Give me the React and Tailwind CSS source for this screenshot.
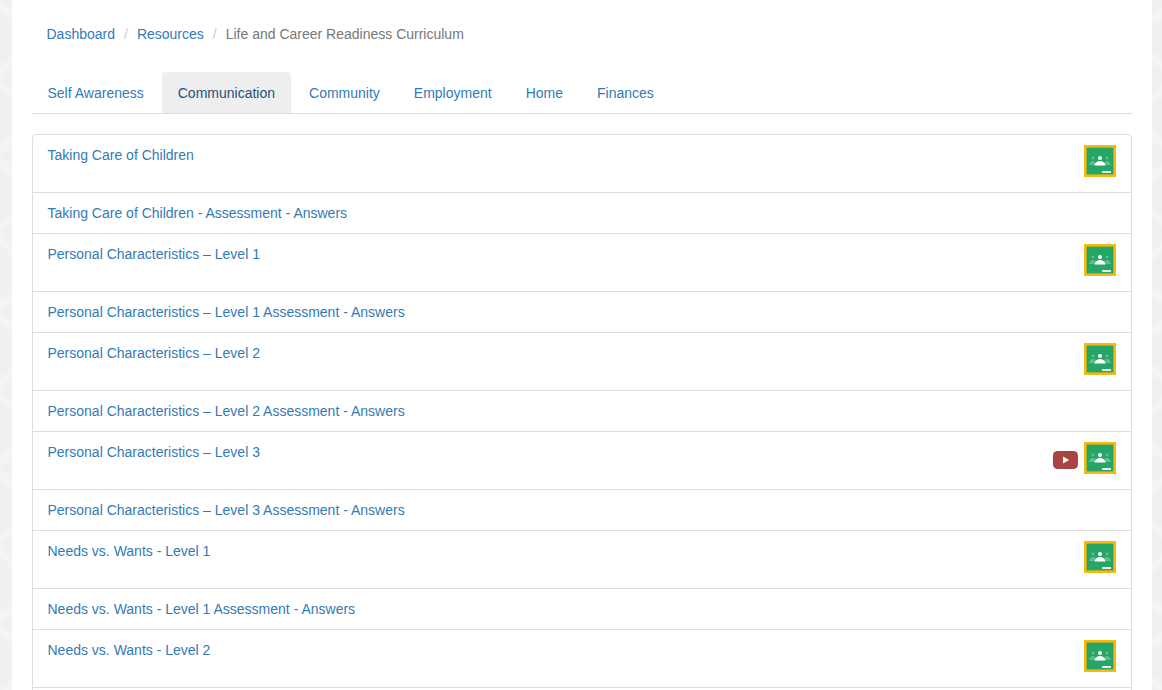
const tabs = ['Self Awareness', 'Communication', 'Community', 'Employment', 'Home', 'Finances'];

const rows = [
  { title: 'Taking Care of Children', classroom: true },
  { title: 'Taking Care of Children - Assessment - Answers' },
  { title: 'Personal Characteristics – Level 1', classroom: true },
  { title: 'Personal Characteristics – Level 1 Assessment - Answers' },
  { title: 'Personal Characteristics – Level 2', classroom: true },
  { title: 'Personal Characteristics – Level 2 Assessment - Answers' },
  { title: 'Personal Characteristics – Level 3', classroom: true, video: true },
  { title: 'Personal Characteristics – Level 3 Assessment - Answers' },
  { title: 'Needs vs. Wants - Level 1', classroom: true },
  { title: 'Needs vs. Wants - Level 1 Assessment - Answers' },
  { title: 'Needs vs. Wants - Level 2', classroom: true },
];

function ClassroomIcon() {
  return (
    <svg width="32" height="32" viewBox="0 0 32 32" className="block">
      <rect width="32" height="32" fill="#f9b90c" />
      <rect x="2.600" y="2.600" width="26.800" height="26.800" fill="#25a667" />
      <circle cx="9" cy="13" r="1.400" fill="#5fbd8f" />
      <circle cx="23" cy="13" r="1.400" fill="#5fbd8f" />
      <path d="M5 20c.5-2.500 2.200-4 4-4s3.500 1.500 4 4zM19 20c.5-2.500 2.200-4 4-4s3.500 1.500 4 4z" fill="#5fbd8f" />
      <circle cx="16" cy="13" r="2" fill="#fff" />
      <path d="M10.500 20.500c.6-3 2.800-4.500 5.500-4.500s4.900 1.500 5.500 4.500z" fill="#fff" />
      <rect x="18" y="26" width="9" height="2" fill="#e8efe9" />
    </svg>
  );
}

function VideoIcon() {
  return (
    <svg width="25" height="18" viewBox="0 0 25 18" className="block">
      <rect width="25" height="18" rx="4.500" fill="#a94442" />
      <path d="M10 5.500v7l6-3.500z" fill="#fff" />
    </svg>
  );
}

function ListRow({ row }) {
  return (
    <div className={`flex justify-between border-b border-[#dddddd] pl-[14.5px] pr-[15px] pt-[10px] ${row.classroom ? 'h-[58px]' : 'h-[41px]'}`}>
      <a href="#" className="leading-[20px] text-[#337ab7]">{row.title}</a>
      {row.classroom && (
        <div className="flex items-start gap-[6px]">
          {row.video && <div className="mt-[9px]"><VideoIcon /></div>}
          <ClassroomIcon />
        </div>
      )}
    </div>
  );
}

export default function App() {
  return (
    <div className="h-[690px] overflow-hidden bg-[#f0f0f0] bg-[linear-gradient(40deg,transparent_44%,#f5f5f5_50%,transparent_56%),linear-gradient(-40deg,transparent_44%,#f5f5f5_50%,transparent_56%)] bg-[size:78px_78px] font-['Liberation_Sans',Arial,sans-serif] text-[14px]">
      <div className="ml-[12px] h-full w-[1140px] overflow-hidden bg-white px-[20px]">
        {/* Breadcrumb */}
        <div className="flex h-[72px] items-start pl-[14.5px] pt-[24px] leading-[20px]">
          <a href="#" className="text-[#337ab7]">Dashboard</a>
          <span className="px-[9px] text-[#cccccc]">/</span>
          <a href="#" className="text-[#337ab7]">Resources</a>
          <span className="px-[9px] text-[#cccccc]">/</span>
          <span className="text-[#777777]">Life and Career Readiness Curriculum</span>
        </div>

        {/* Tabs */}
        <div className="h-[42px] border-b border-[#dddddd]">
          <div className="-ml-[0.5px] flex">
            {tabs.map((tab) => (
              <a
                key={tab}
                href="#"
                className={`mr-[2px] h-[41px] rounded-t-[4px] px-[16px] pt-[11px] leading-[20px] ${tab === 'Communication' ? 'bg-[#eeeeee] text-[#23527c]' : 'text-[#337ab7]'}`}
              >
                {tab}
              </a>
            ))}
          </div>
        </div>

        {/* Lesson list */}
        <div className="mt-[20px] rounded-[4px] border border-[#dddddd] pb-[10px]">
          {rows.map((row) => (
            <ListRow key={row.title} row={row} />
          ))}
        </div>
      </div>
    </div>
  );
}
